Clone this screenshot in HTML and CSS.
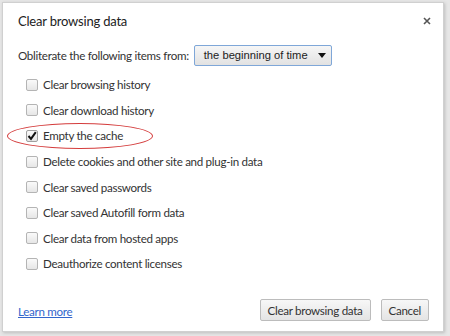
FILE: index.html
```html
<!DOCTYPE html>
<html>
<head>
<meta charset="utf-8">
<link rel="stylesheet" href="styles.css">
</head>
<body>
<div class="dialog">
  <div class="header">
    <h1 class="title">Clear browsing data</h1>
    <svg class="close" width="8" height="8" viewBox="0 0 8 8"><path d="M1 1 L7 7 M7 1 L1 7" stroke="#555" stroke-width="1.6"/></svg>
  </div>
  <div class="from-row">
    <span class="from-label">Obliterate the following items from:</span>
    <div class="select">
      <span>the beginning of time</span>
      <svg class="arrow" width="8" height="5" viewBox="0 0 8 5"><path d="M0 0 H8 L4 5 Z" fill="#111"/></svg>
    </div>
  </div>
  <ul class="items">
    <li class="item"><span class="checkbox"></span><span>Clear browsing history</span></li>
    <li class="item"><span class="checkbox"></span><span>Clear download history</span></li>
    <li class="item highlighted"><span class="checkbox checked"><svg width="10" height="10" viewBox="0 0 10 10"><path d="M1.5 5 L4 7.8 L8.8 1.2" fill="none" stroke="#111" stroke-width="2"/></svg></span><span>Empty the cache</span><span class="ellipse"></span></li>
    <li class="item"><span class="checkbox"></span><span>Delete cookies and other site and plug-in data</span></li>
    <li class="item"><span class="checkbox"></span><span>Clear saved passwords</span></li>
    <li class="item"><span class="checkbox"></span><span>Clear saved Autofill form data</span></li>
    <li class="item"><span class="checkbox"></span><span>Clear data from hosted apps</span></li>
    <li class="item"><span class="checkbox"></span><span>Deauthorize content licenses</span></li>
  </ul>
  <div class="footer">
    <a class="learn" href="#">Learn more</a>
    <div class="buttons">
      <button class="btn">Clear browsing data</button>
      <button class="btn">Cancel</button>
    </div>
  </div>
</div>
</body>
</html>
```
FILE: styles.css
```css
html, body {
  margin: 0;
  padding: 0;
}
body {
  width: 450px;
  height: 336px;
  background: #e6e6e6;
  font-family: Lato, "Open Sans", sans-serif;
  font-size: 11.6px;
  letter-spacing: -0.3px;
  color: #333;
  overflow: hidden;
}
.dialog {
  position: relative;
  margin: 3px 0 0 3px;
  width: 440px;
  height: 328px;
  box-sizing: border-box;
  background: #fff;
  box-shadow: 0 0 0 1px #d0d0d0, 1px 1px 3px 1px #bdbdbd;
  padding: 0 15px;
  display: flex;
  flex-direction: column;
}
.header {
  display: flex;
  justify-content: space-between;
  align-items: center;
  height: 34px;
}
.title {
  margin: 0;
  font-size: 13px;
  letter-spacing: -0.2px;
  font-weight: normal;
  color: #222;
  padding-top: 2px;
}
.close {
  margin-right: -3px;
  margin-top: 2px;
}
.from-row {
  display: flex;
  align-items: center;
  height: 22px;
  margin-top: 7px;
  gap: 5px;
}
.select {
  display: flex;
  align-items: center;
  justify-content: space-between;
  width: 138px;
  height: 21px;
  box-sizing: border-box;
  border: 1px solid #7fa7d8;
  border-radius: 2px;
  background: linear-gradient(#f6f6f6, #e2e2e2);
  padding: 0 5px 0 9px;
  color: #222;
  font-family: "Liberation Sans", Arial, sans-serif;
  font-size: 11.2px;
  letter-spacing: 0;
}
.items {
  list-style: none;
  margin: 6px 0 0 0;
  padding: 0;
}
.item {
  position: relative;
  display: flex;
  align-items: center;
  height: 25.6px;
  padding-left: 8px;
  gap: 5px;
}
.checkbox {
  width: 12px;
  height: 12px;
  box-sizing: border-box;
  border: 1px solid #b4b4b4;
  border-radius: 2px;
  background: linear-gradient(#fafafa, #e6e6e6);
  display: flex;
  align-items: center;
  justify-content: center;
}
.checked {
  border-color: #a0a0a0;
}
.ellipse {
  position: absolute;
  left: -11px;
  top: 0;
  width: 146px;
  height: 26px;
  box-sizing: border-box;
  border: 1px solid #d43c3c;
  border-radius: 50%;
}
.footer {
  margin-top: auto;
  margin-bottom: 10px;
  display: flex;
  justify-content: space-between;
  align-items: center;
}
.learn {
  color: #3366cc;
  text-decoration: underline;
  margin-top: 3px;
}
.buttons {
  display: flex;
  gap: 10px;
  margin-right: -1px;
}
.btn {
  font-family: Lato, "Open Sans", sans-serif;
  font-size: 11.6px;
  letter-spacing: -0.3px;
  color: #333;
  height: 22px;
  padding: 0 7px;
  border: 1px solid #bcbcbc;
  border-radius: 2px;
  background: linear-gradient(#f7f7f7, #e4e4e4);
}
```
